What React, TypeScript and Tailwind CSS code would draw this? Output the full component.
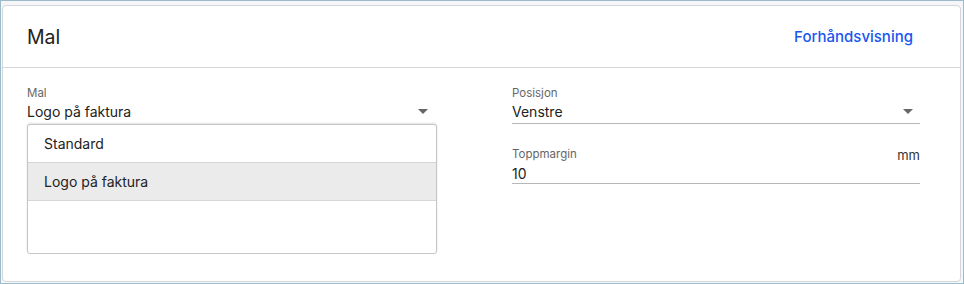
function Caret() {
  return (
    <svg width="10" height="5" viewBox="0 0 10 5" className="shrink-0">
      <path d="M0 0h10L5 5z" fill="#666" />
    </svg>
  );
}

export default function App() {
  return (
    <div
      className="h-[284px] w-[964px] border border-[#9dbccb] bg-[#f4f6f7] pt-1 pb-[1px] pl-[1px] pr-[2px]"
      style={{ fontFamily: "Inter, 'Noto Sans', sans-serif" }}
    >
      <div className="flex h-full flex-col rounded-[4px] border border-[#d3d6da] bg-white">
        {/* header */}
        <div className="flex h-[62px] items-center justify-between border-b border-[#d3d6da] pt-[2px] pl-[24px] pr-[47px]">
          <h2 className="text-[19.5px] text-[#222]">Mal</h2>
          <button className="text-[15px] font-medium text-[#1a56f0]">
            Forhåndsvisning
          </button>
        </div>

        {/* body */}
        <div className="grid grid-cols-[410px_408px] gap-x-[75px] pl-[24px] pt-[18px]">
          {/* left column */}
          <div className="flex flex-col">
            <label className="text-[11.5px] leading-[14px] text-[#666]">Mal</label>
            <div className="flex h-[22px] items-center justify-between pr-[9px]">
              <span className="text-[14px] text-[#222]">Logo på faktura</span>
              <Caret />
            </div>
            <div className="mt-[2px] h-[130px] rounded-[3px] border border-[#c2c5c9] bg-white shadow-[0_-1px_2px_rgba(0,0,0,0.12)]">
              <div className="flex h-[38px] items-center border-b border-[#d6d6d6] pl-[16px] text-[14px] text-[#222]">
                Standard
              </div>
              <div className="flex h-[38px] items-center border-b border-[#d6d6d6] bg-[#ebebeb] pl-[16px] text-[14px] text-[#222]">
                Logo på faktura
              </div>
            </div>
          </div>

          {/* right column */}
          <div className="flex flex-col">
            <label className="text-[11.5px] leading-[14px] text-[#666]">Posisjon</label>
            <div className="flex h-[24px] items-center justify-between border-b border-[#b5b8bb] pr-[7px]">
              <span className="text-[14px] text-[#222]">Venstre</span>
              <Caret />
            </div>
            <div className="mt-[23px] flex items-start justify-between">
              <label className="text-[11.5px] leading-[14px] text-[#666]">Toppmargin</label>
              <span className="text-[13px] leading-[16px] text-[#333]">mm</span>
            </div>
            <div className="flex h-[21px] items-center border-b border-[#b5b8bb]">
              <span className="text-[14px] text-[#222]">10</span>
            </div>
          </div>
        </div>
      </div>
    </div>
  );
}
